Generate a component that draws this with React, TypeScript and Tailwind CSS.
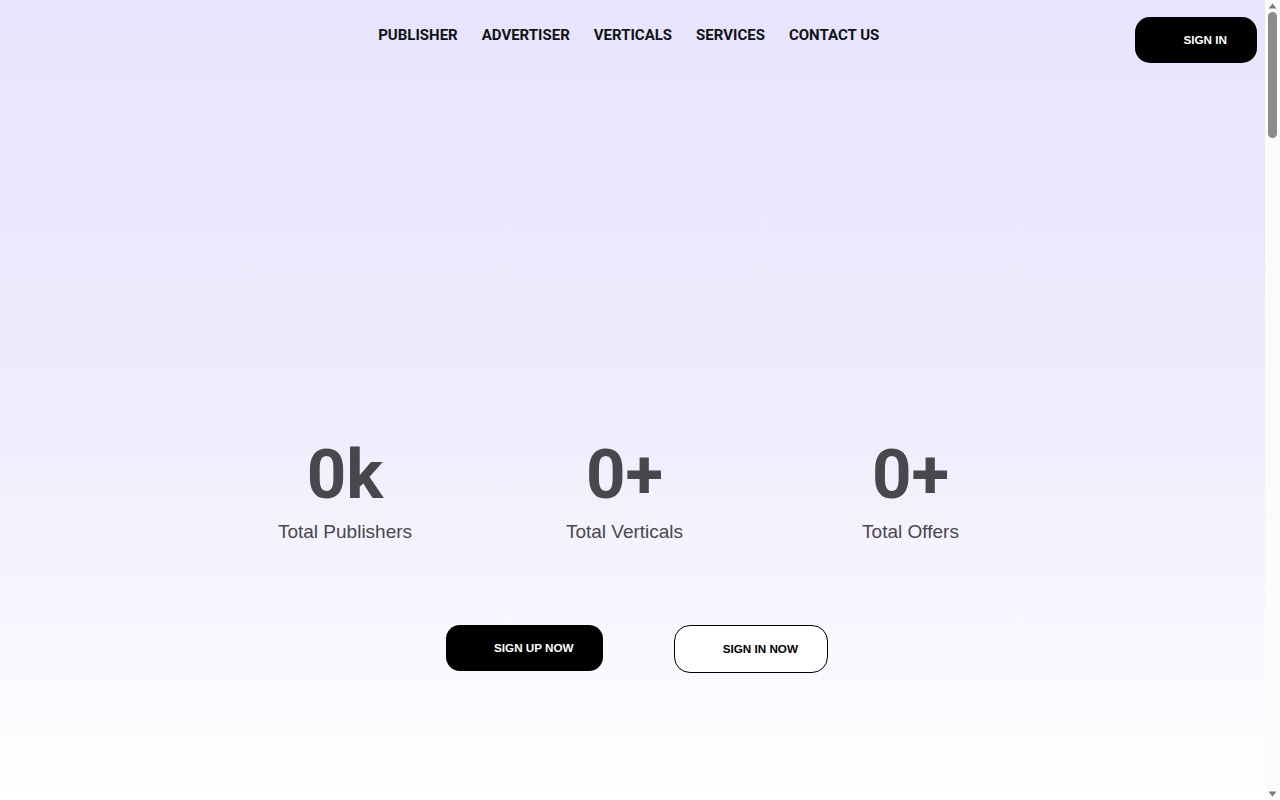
import React from 'react';

const navLinks = ['PUBLISHER', 'ADVERTISER', 'VERTICALS', 'SERVICES', 'CONTACT US'];

const stats = [
  { value: '0k', label: 'Total Publishers' },
  { value: '0+', label: 'Total Verticals' },
  { value: '0+', label: 'Total Offers' },
];

function Header() {
  return (
    <header className="flex items-start justify-between px-2">
      {/* logo slot (image not loaded) */}
      <div className="w-[114px] h-[46px]" />
      <nav className="mt-[26px] flex items-center gap-[24px]">
        {navLinks.map((l) => (
          <a
            key={l}
            href="#"
            className="text-[15px] leading-[18px] font-bold text-[#111118]"
            style={{ fontFamily: 'Roboto, sans-serif' }}
          >
            {l}
          </a>
        ))}
      </nav>
      <button className="mt-[17px] flex h-[46px] items-center rounded-[15px] bg-black pl-12 pr-[30px] text-[11.7px] font-bold text-white">
        SIGN IN
      </button>
    </header>
  );
}

function Scrollbar() {
  return (
    <div className="sticky top-0 flex h-screen w-[15px] shrink-0 flex-col items-center bg-[#fbfbfc]">
      <svg width="9" height="6" viewBox="0 0 9 6" className="mt-[3px]">
        <path d="M4.5 0.5 L8.5 5.5 L0.5 5.5 Z" fill="#7a7a7a" />
      </svg>
      <div className="mt-[3px] h-[126px] w-[9px] rounded-full bg-[#8c8c8c]" />
      <div className="flex-1" />
      <svg width="9" height="6" viewBox="0 0 9 6" className="mb-[3px]">
        <path d="M0.5 0.5 L8.5 0.5 L4.5 5.5 Z" fill="#7a7a7a" />
      </svg>
    </div>
  );
}

export default function App() {
  return (
    <div className="flex min-h-screen items-start bg-white" style={{ fontFamily: '"Liberation Sans", Arial, sans-serif' }}>
      <div className="w-[1265px] shrink-0">
        <section className="h-[800px] bg-linear-to-b from-[#e7e4fd] via-[#eeecfd] to-white">
          <Header />

          <div className="mt-[377px] grid grid-cols-[280px_279px_293px] pl-[205px]">
            {stats.map((s) => (
              <div key={s.label} className="flex flex-col items-center">
                <div
                  className="text-[69px] leading-none font-bold text-[#48474d]"
                  style={{ fontFamily: 'Roboto, sans-serif' }}
                >
                  {s.value}
                </div>
                <div className="mt-[9px] text-[19px] leading-[28px] text-[#48474d]">{s.label}</div>
              </div>
            ))}
          </div>

          <div className="mt-[79px] flex items-start justify-center gap-[71px] pl-[9px]">
            <button className="flex h-[46px] items-center rounded-[14px] bg-black pl-12 pr-[29px] text-[11.7px] font-bold text-white">
              SIGN UP NOW
            </button>
            <button className="flex h-[48px] items-center rounded-[16px] border border-black bg-white pl-12 pr-[29px] text-[11.7px] font-bold text-black">
              SIGN IN NOW
            </button>
          </div>
        </section>

        {/* rest of page: sections below the fold */}
        <main className="h-[4300px] bg-white" />
      </div>
      <Scrollbar />
    </div>
  );
}
